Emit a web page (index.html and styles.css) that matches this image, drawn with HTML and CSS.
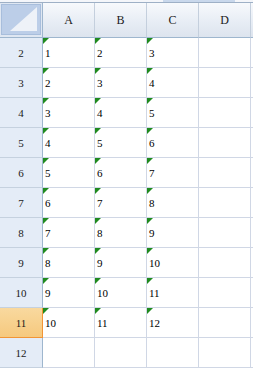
FILE: index.html
```html
<!DOCTYPE html>
<html lang="en">
<head>
    <meta charset="UTF-8">
    <title>Sheet</title>
    <link rel="stylesheet" href="styles.css">
</head>
<body>
    <div class="sheet">
        <div class="top-strip"><div class="strip-bar"></div></div>

        <div class="corner"><div class="corner-tri"></div></div>
        <div class="col-head">A</div>
        <div class="col-head">B</div>
        <div class="col-head">C</div>
        <div class="col-head">D</div>
        <div class="col-head blank"></div>

        <div class="row-head">2</div>
        <div class="cell num">1</div><div class="cell num">2</div><div class="cell num">3</div><div class="cell"></div><div class="cell end"></div>
        <div class="row-head">3</div>
        <div class="cell num">2</div><div class="cell num">3</div><div class="cell num">4</div><div class="cell"></div><div class="cell end"></div>
        <div class="row-head">4</div>
        <div class="cell num">3</div><div class="cell num">4</div><div class="cell num">5</div><div class="cell"></div><div class="cell end"></div>
        <div class="row-head">5</div>
        <div class="cell num">4</div><div class="cell num">5</div><div class="cell num">6</div><div class="cell"></div><div class="cell end"></div>
        <div class="row-head">6</div>
        <div class="cell num">5</div><div class="cell num">6</div><div class="cell num">7</div><div class="cell"></div><div class="cell end"></div>
        <div class="row-head">7</div>
        <div class="cell num">6</div><div class="cell num">7</div><div class="cell num">8</div><div class="cell"></div><div class="cell end"></div>
        <div class="row-head">8</div>
        <div class="cell num">7</div><div class="cell num">8</div><div class="cell num">9</div><div class="cell"></div><div class="cell end"></div>
        <div class="row-head">9</div>
        <div class="cell num">8</div><div class="cell num">9</div><div class="cell num">10</div><div class="cell"></div><div class="cell end"></div>
        <div class="row-head">10</div>
        <div class="cell num">9</div><div class="cell num">10</div><div class="cell num">11</div><div class="cell"></div><div class="cell end"></div>
        <div class="row-head active">11</div>
        <div class="cell num">10</div><div class="cell num">11</div><div class="cell num">12</div><div class="cell"></div><div class="cell end"></div>
        <div class="row-head">12</div>
        <div class="cell"></div><div class="cell"></div><div class="cell"></div><div class="cell"></div><div class="cell end"></div>
    </div>
</body>
</html>
```

FILE: styles.css
```css
* {
    margin: 0;
    padding: 0;
    box-sizing: border-box;
}

body {
    background: white;
    font-family: "Liberation Serif", "Times New Roman", serif;
    color: #000;
    overflow: hidden;
}

.sheet {
    display: grid;
    grid-template-columns: 43px 52px 52px 52px 52px 1fr;
    grid-template-rows: 3px 35px repeat(11, 30px);
    width: 253px;
}

.top-strip {
    grid-column: 1 / -1;
    background: #f4f6fa;
    border-bottom: 1px solid #9eb0c6;
    position: relative;
}

.strip-bar {
    position: absolute;
    left: 163px;
    width: 72px;
    top: 0;
    height: 2px;
    background: #c9d8ec;
}

.corner {
    background: #dfe7f2;
    border-right: 1px solid #9eb6ce;
    border-bottom: 1px solid #9eb6ce;
    padding: 1px 1px 2px 1px;
}

.corner-tri {
    width: 100%;
    height: 100%;
    background: #bccee8;
    border: 1px solid #a8bedc;
    position: relative;
    overflow: hidden;
}

.corner-tri::after {
    content: "";
    position: absolute;
    right: 3px;
    bottom: 3px;
    width: 0;
    height: 0;
    border-left: 27px solid transparent;
    border-bottom: 24px solid #eef2f8;
}

.col-head {
    background: linear-gradient(#f7f9fc, #e6ecf4 60%, #dde4ee);
    border-right: 1px solid #c4cfdd;
    border-bottom: 1px solid #9eb6ce;
    display: flex;
    align-items: center;
    justify-content: center;
    font-size: 12px;
    color: #1a1a1a;
}

.col-head.blank {
    border-right: none;
}

.row-head {
    background: #e4ecf7;
    border-right: 1px solid #9eb6ce;
    border-bottom: 1px solid #c5d1df;
    display: flex;
    align-items: center;
    justify-content: center;
    font-size: 11px;
    color: #1a1a1a;
}

.row-head.active {
    background: linear-gradient(#f9d99f, #f6c97e);
    border-right-color: #f29536;
    border-bottom-color: #f29536;
}

.cell {
    border-right: 1px solid #d0d7e5;
    border-bottom: 1px solid #d0d7e5;
    display: flex;
    align-items: center;
    padding-left: 2px;
    padding-top: 1px;
    font-size: 11px;
    position: relative;
}

.cell.end {
    border-right: none;
}

.num::before {
    content: "";
    position: absolute;
    left: 0;
    top: 0;
    border-top: 6px solid #1f8a1f;
    border-right: 6px solid transparent;
}
```
